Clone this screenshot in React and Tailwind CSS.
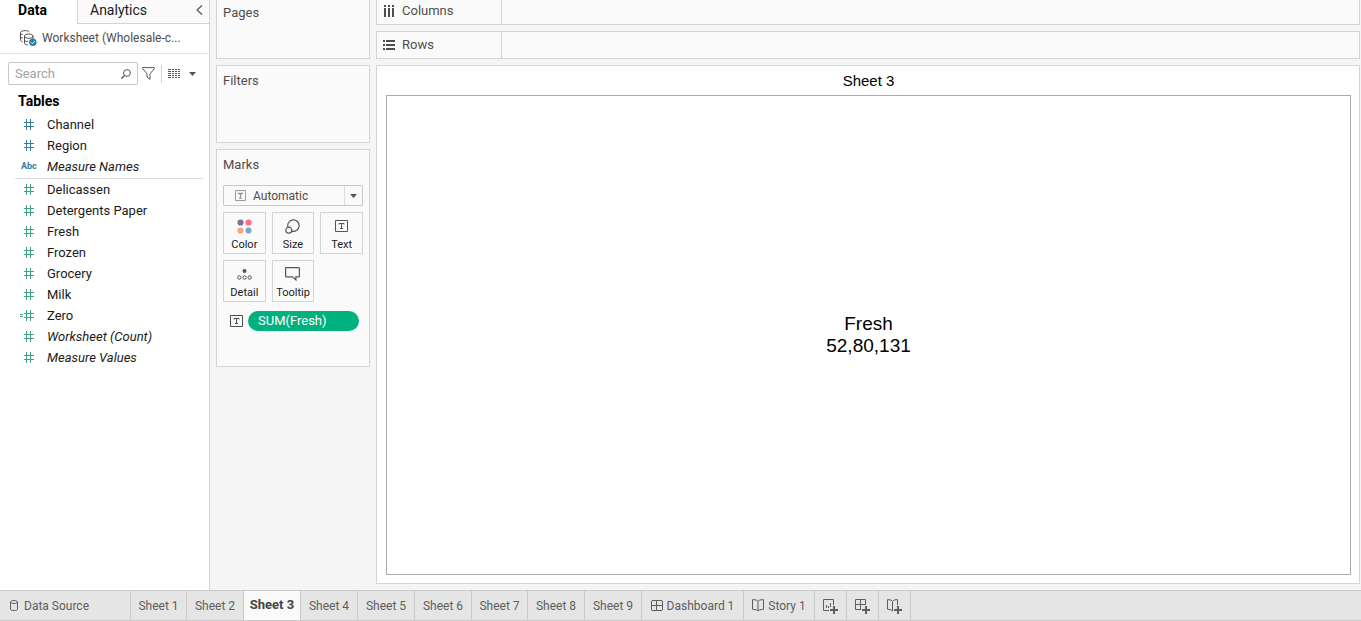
import React from "react";

const svg = { fill: "none", stroke: "currentColor" };

function HashIcon({ calculated }) {
  return (
    <svg width="15" height="11" viewBox="0 0 15 11" {...svg} shapeRendering="crispEdges" aria-hidden="true">
      <path d="M6.5 0v11M10.5 0v11M4 3.5h10M4 7.5h10" />
      {calculated && <path d="M0 4.5h3M0 6.5h3" />}
    </svg>
  );
}

function TextMark() {
  return (
    <svg width="13" height="12" viewBox="0 0 13 12" {...svg} aria-hidden="true">
      <path d="M.5.5h12v11H.5zM4 4.5v-1h5v1M6.5 3.5v5M5 8.5h3" />
    </svg>
  );
}

function SheetTextMark() {
  return (
    <svg width="11" height="11" viewBox="0 0 11 11" {...svg} aria-hidden="true">
      <path d="M.5.5h10v10H.5z" />
      <path d="M3 3.5h5M5.5 3v5" strokeWidth="1.4" />
      <path d="M4 8.3h3" />
    </svg>
  );
}

function ColorMark() {
  return (
    <svg width="15" height="15" viewBox="0 0 15 15" aria-hidden="true">
      <circle cx="3.5" cy="3.5" r="3.1" fill="#856c97" />
      <circle cx="11.5" cy="3.5" r="3.1" fill="#fb6f83" />
      <circle cx="3.5" cy="11.5" r="3.1" fill="#f5a57d" />
      <circle cx="11.5" cy="11.5" r="3.1" fill="#7fa5ce" />
    </svg>
  );
}

function SizeMark() {
  return (
    <svg width="15" height="15" viewBox="0 0 15 15" {...svg} strokeWidth="1.2" aria-hidden="true">
      <path d="M3 8.300a5.700 5.700 0 1 1 4 3.800" />
      <circle cx="3.8" cy="11.2" r="3" />
    </svg>
  );
}

function DetailMark() {
  return (
    <svg width="15" height="11" viewBox="0 0 15 11" {...svg} aria-hidden="true">
      <circle cx="7.5" cy="2" r="2" fill="currentColor" stroke="none" />
      <circle cx="2.3" cy="8.5" r="1.7" />
      <circle cx="7.5" cy="8.5" r="1.7" />
      <circle cx="12.7" cy="8.5" r="1.7" />
    </svg>
  );
}

function TooltipMark() {
  return (
    <svg width="15" height="14" viewBox="0 0 15 14" {...svg} strokeWidth="1.2" aria-hidden="true">
      <path d="M1 .600h13l.4.500v8.300l-.5.500h-3v3l-3.400-3H1L.6 9.400V1z" />
    </svg>
  );
}

function DataSourceIcon() {
  return (
    <svg width="17" height="16" viewBox="0 0 17 16" {...svg} aria-hidden="true">
      <path d="M2.5 11.8C1.2 11.4.5 10.9.5 10V2.7C.5 1.5 2.6.6 5.2.6c1.8 0 3.3.4 4.1 1.2M.5 3c0 .9.8 1.4 2.3 1.8M.5 6.5c0 .8.8 1.3 2.3 1.7" />
      <path d="M4.5 6.2c0-1.3 1.9-2.2 4.3-2.2s4.2.9 4.2 2.2-1.8 2.1-4.2 2.1-4.3-.8-4.3-2.1zV13c0 1 1.2 1.8 3.4 2M13 6.2V9M4.5 9.6c0 1.2 1.5 1.9 3.5 2" />
      <circle cx="12.8" cy="12.3" r="3.7" fill="#2f7fa3" stroke="none" />
      <path d="m11 12.3 1.4 1.4 2.4-2.6" stroke="#fff" />
    </svg>
  );
}

function ColumnsIcon() {
  return (
    <svg width="12" height="12" viewBox="0 0 12 12" fill="currentColor" aria-hidden="true">
      <path d="M1 0h2v2H1zM5 0h2v2H5zM9 0h2v2H9zM1 3h2v9H1zM5 3h2v9H5zM9 3h2v9H9z" />
    </svg>
  );
}

function RowsIcon() {
  return (
    <svg width="12" height="10" viewBox="0 0 12 10" fill="currentColor" aria-hidden="true">
      <path d="M0 0h2v2H0zM0 4h2v2H0zM0 8h2v2H0zM3 0h9v2H3zM3 4h9v2H3zM3 8h9v2H3z" />
    </svg>
  );
}

function CylinderIcon() {
  return (
    <svg width="8" height="11" viewBox="0 0 8 11" {...svg} aria-hidden="true">
      <path d="M.5 2C.5 1.200 2 .500 4 .500s3.500.7 3.500 1.500S6 3.500 4 3.500.5 2.800.5 2zv7c0 .8.8 1.500 3.500 1.500S7.500 9.800 7.500 9V2" />
    </svg>
  );
}

function DashboardIcon() {
  return (
    <svg width="12" height="12" viewBox="0 0 12 12" {...svg} aria-hidden="true">
      <path d="M1 .5h10l.5.5v9l-.5.5H1L.5 10V1zM5.500.5v10M.5 5.500h11" />
    </svg>
  );
}

function StoryIcon() {
  return (
    <svg width="12" height="13" viewBox="0 0 12 13" {...svg} aria-hidden="true">
      <path d="M6 2.500 4.500 1 .5.600v9.700l4 .5L6 12l1.500-1.200 4-.5V.600L7.500 1 6 2.500V12" />
    </svg>
  );
}

const plus = <path d="M12 7v8M8 11h8" strokeWidth="2" />;

function NewSheetIcon() {
  return (
    <svg width="17" height="16" viewBox="0 0 17 16" {...svg} aria-hidden="true">
      <path d="M7 11.500H1.500v-11h10V6M4.500 6v3M6.500 7v2M8.500 4v4" />
      {plus}
    </svg>
  );
}

function NewDashboardIcon() {
  return (
    <svg width="17" height="16" viewBox="0 0 17 16" {...svg} aria-hidden="true">
      <path d="M7 10.500H1.500V.500h10V6M6.500.500v10M1.500 5.500h10" />
      {plus}
    </svg>
  );
}

function NewStoryIcon() {
  return (
    <svg width="17" height="16" viewBox="0 0 17 16" {...svg} aria-hidden="true">
      <path d="M6.500 2.500 5 1 1.500.600v9.700l3.500.5 1.500 1.200V2.500L8 1l3.500-.4V6" />
      {plus}
    </svg>
  );
}

function CaretIcon() {
  return (
    <svg width="7" height="4" viewBox="0 0 7 4" fill="currentColor" aria-hidden="true">
      <path d="M0 0h7L3.500 4z" />
    </svg>
  );
}

const dimensions = [
  { name: "Channel" },
  { name: "Region" },
  { name: "Measure Names", abc: true, italic: true },
];

const measures = [
  { name: "Delicassen" },
  { name: "Detergents Paper" },
  { name: "Fresh" },
  { name: "Frozen" },
  { name: "Grocery" },
  { name: "Milk" },
  { name: "Zero", calculated: true },
  { name: "Worksheet (Count)", italic: true },
  { name: "Measure Values", italic: true },
];

function FieldList({ fields, iconColor }) {
  return (
    <ul>
      {fields.map((f) => (
        <li key={f.name} className="flex h-[21px] items-center">
          <span className={`flex w-[27px] shrink-0 ${iconColor}`}>
            {f.abc ? (
              <span className="pl-px text-[9px] font-bold">Abc</span>
            ) : (
              <HashIcon calculated={f.calculated} />
            )}
          </span>
          <span className={f.italic ? "italic" : ""}>{f.name}</span>
        </li>
      ))}
    </ul>
  );
}

function DataPane() {
  return (
    <aside className="flex w-[210px] shrink-0 flex-col border-r border-[#d4d4d4] bg-white text-[13px] text-[#1b1b1b]">
      <div className="flex h-6 text-sm">
        <button className="w-[77px] pr-3 pb-1 font-bold text-black">Data</button>
        <div className="flex flex-1 items-center justify-between border-b border-l border-[#d4d4d4] bg-[#fafafa] pr-1.5 pb-1 pl-3">
          <button>Analytics</button>
          <button aria-label="Collapse pane" className="text-[#555]">
            <svg width="7" height="10" viewBox="0 0 7 10" {...svg} aria-hidden="true">
              <path d="M6 .5 1 5l5 4.500" strokeWidth="1.2" />
            </svg>
          </button>
        </div>
      </div>
      <button className="flex h-[30px] items-center gap-[5px] border-b border-[#e4e4e4] pb-0.5 pl-5 text-xs text-[#4e4e4e]">
        <DataSourceIcon />
        <span>Worksheet (Wholesale-c...</span>
      </button>
      <div className="flex items-center pt-2 pl-2 text-[#555]">
        <label className="flex h-[23px] w-[130px] items-center rounded-[2px] border border-[#c8c8c8] px-1.5">
          <input
            aria-label="Search fields"
            placeholder="Search"
            className="min-w-0 flex-1 outline-none placeholder:text-[#a3a3a3]"
          />
          <svg width="10" height="10" viewBox="0 0 10 10" {...svg} aria-hidden="true">
            <circle cx="6" cy="4" r="3.400" />
            <path d="M3.500 6.500.4 9.600" strokeWidth="1.300" />
          </svg>
        </label>
        <button aria-label="Filter fields" className="ml-1">
          <svg width="13" height="13" viewBox="0 0 13 13" {...svg} aria-hidden="true">
            <path d="M.6.600h11.800v1L8 6.800v5.500L5 10V6.800L.6 1.600z" />
          </svg>
        </button>
        <span className="ml-1.5 h-[18px] w-px bg-[#d4d4d4]" />
        <button aria-label="View options" className="ml-1.5 flex items-center gap-[9px]">
          <svg width="12" height="10" viewBox="0 0 12 10" fill="currentColor" aria-hidden="true">
            <path d="M0 0h3v1H0zM4 0h2v1H4zM7 0h2v1H7zM10 0h2v1h-2zM0 2h3v1H0zM4 2h2v1H4zM7 2h2v1H7zM10 2h2v1h-2zM0 4h3v1H0zM4 4h2v1H4zM7 4h2v1H7zM10 4h2v1h-2zM0 6h3v1H0zM4 6h2v1H4zM7 6h2v1H7zM10 6h2v1h-2zM0 8h3v1H0zM4 8h2v1H4zM7 8h2v1H7zM10 8h2v1h-2z" />
          </svg>
          <CaretIcon />
        </button>
      </div>
      <h2 className="mt-1.5 h-[23px] pl-[18px] text-sm font-bold text-black">Tables</h2>
      <div className="pl-5">
        <FieldList fields={dimensions} iconColor="text-[#3a7d9b]" />
      </div>
      <hr className="mt-px mr-1.5 ml-[15px] border-[#dcdcdc]" />
      <div className="pl-5">
        <FieldList fields={measures} iconColor="text-[#43a383]" />
      </div>
    </aside>
  );
}

const markButtons = [
  { label: "Color", Icon: ColorMark },
  { label: "Size", Icon: SizeMark },
  { label: "Text", Icon: TextMark },
  { label: "Detail", Icon: DetailMark },
  { label: "Tooltip", Icon: TooltipMark },
];

function Cards() {
  return (
    <section className="flex w-[154px] shrink-0 flex-col gap-1.5 text-[13px] text-[#4e4e4e]">
      <div className="h-[59px] border border-t-0 border-[#d4d4d4] bg-[#fafafa] px-1.5 py-[3px]">Pages</div>
      <div className="h-[78px] border border-[#d4d4d4] bg-[#fafafa] px-1.5 py-[5px]">Filters</div>
      <div className="h-[218px] border border-[#d4d4d4] bg-[#fafafa] px-1.5 pt-[5px]">
        <h2 className="h-[30px]">Marks</h2>
        <button className="flex h-[21px] w-full items-center rounded-[1px] border border-[#c8c8c8] pl-[11px] text-xs">
          <span className="text-[#999]">
            <SheetTextMark />
          </span>
          <span className="flex-1 pl-[7px] text-left">Automatic</span>
          <span className="flex h-full w-[18px] items-center justify-center border-l border-[#dcdcdc] text-[#555]">
            <CaretIcon />
          </span>
        </button>
        <div className="mt-1.5 grid grid-cols-3 gap-1.5 text-[11px]">
          {markButtons.map(({ label, Icon }) => (
            <button key={label} className="flex h-[42px] flex-col items-center border border-[#d4d4d4]">
              <span className="flex h-[26px] items-center text-[#555]">
                <Icon />
              </span>
              <span className="leading-3 text-[#1b1b1b]">{label}</span>
            </button>
          ))}
        </div>
        <div className="mt-[9px] flex items-center gap-[5px] pr-1 pl-[7px]">
          <TextMark />
          <button className="h-5 flex-1 rounded-full bg-[#00b180] pl-2.5 text-left text-white">SUM(Fresh)</button>
        </div>
      </div>
    </section>
  );
}

function Workspace() {
  return (
    <main className="flex min-w-0 flex-1 flex-col gap-1.5 text-[13px] text-[#4e4e4e]">
      <div className="flex h-[25px] shrink-0 border border-t-0 border-[#d4d4d4] bg-[#fafafa]">
        <div className="flex w-[125px] items-center gap-[7px] border-r border-[#d4d4d4] pb-[3px] pl-1.5">
          <ColumnsIcon />
          Columns
        </div>
      </div>
      <div className="flex h-7 shrink-0 border border-[#d4d4d4] bg-[#fafafa]">
        <div className="flex w-[125px] items-center gap-[7px] border-r border-[#d4d4d4] pl-1.5">
          <RowsIcon />
          Rows
        </div>
      </div>
      <section className="flex flex-1 flex-col border border-[#d4d4d4] bg-white pr-2 pb-2 pl-[9px] font-['Liberation_Sans',Arial,sans-serif] text-black">
        <h1 className="h-[29px] text-center text-[15px] leading-[29px]">Sheet 3</h1>
        <div className="flex flex-1 flex-col items-center justify-center border border-[#ababab] text-[19px] leading-[22px]">
          <span>Fresh</span>
          <span>52,80,131</span>
        </div>
      </section>
    </main>
  );
}

const tab = "flex h-full items-center justify-center border-r border-[#c9c9c9]";

const sheets = [
  { name: "Sheet 1", width: "w-14" },
  { name: "Sheet 2", width: "w-[57px]" },
  { name: "Sheet 3", width: "w-[57px]" },
  { name: "Sheet 4", width: "w-[57px]" },
  { name: "Sheet 5", width: "w-[57px]" },
  { name: "Sheet 6", width: "w-[57px]" },
  { name: "Sheet 7", width: "w-14" },
  { name: "Sheet 8", width: "w-[57px]" },
  { name: "Sheet 9", width: "w-[57px]" },
];

function SheetTabs({ active }) {
  return (
    <nav className="flex h-[31px] shrink-0 border-y border-[#c9c9c9] bg-[#e5e5e5] text-xs text-[#5e5e5e]">
      <button className="flex h-full w-[131px] items-center gap-1.5 border-r border-[#c9c9c9] pl-2.5">
        <CylinderIcon />
        Data Source
      </button>
      {sheets.map(({ name, width }) => (
        <button
          key={name}
          className={`${tab} ${width} ${name === active ? "bg-[#fafafa] pb-0.5 text-[13px] font-bold text-[#444]" : ""}`}
        >
          {name}
        </button>
      ))}
      <button className={`${tab} w-[102px] gap-1`}>
        <DashboardIcon />
        Dashboard 1
      </button>
      <button className={`${tab} w-[71px] gap-1`}>
        <StoryIcon />
        Story 1
      </button>
      <button aria-label="New worksheet" className={`${tab} w-8 pt-0.5`}>
        <NewSheetIcon />
      </button>
      <button aria-label="New dashboard" className={`${tab} w-8 pt-0.5`}>
        <NewDashboardIcon />
      </button>
      <button aria-label="New story" className={`${tab} w-8 pt-0.5`}>
        <NewStoryIcon />
      </button>
    </nav>
  );
}

export default function App() {
  return (
    <div className="flex min-h-screen flex-col bg-[#f5f5f5] font-[Roboto,'Liberation_Sans',sans-serif] whitespace-nowrap">
      <div className="flex flex-1">
        <DataPane />
        <div className="flex min-w-0 flex-1 gap-1.5 pr-px pb-1.5 pl-1.5">
          <Cards />
          <Workspace />
        </div>
      </div>
      <SheetTabs active="Sheet 3" />
    </div>
  );
}
